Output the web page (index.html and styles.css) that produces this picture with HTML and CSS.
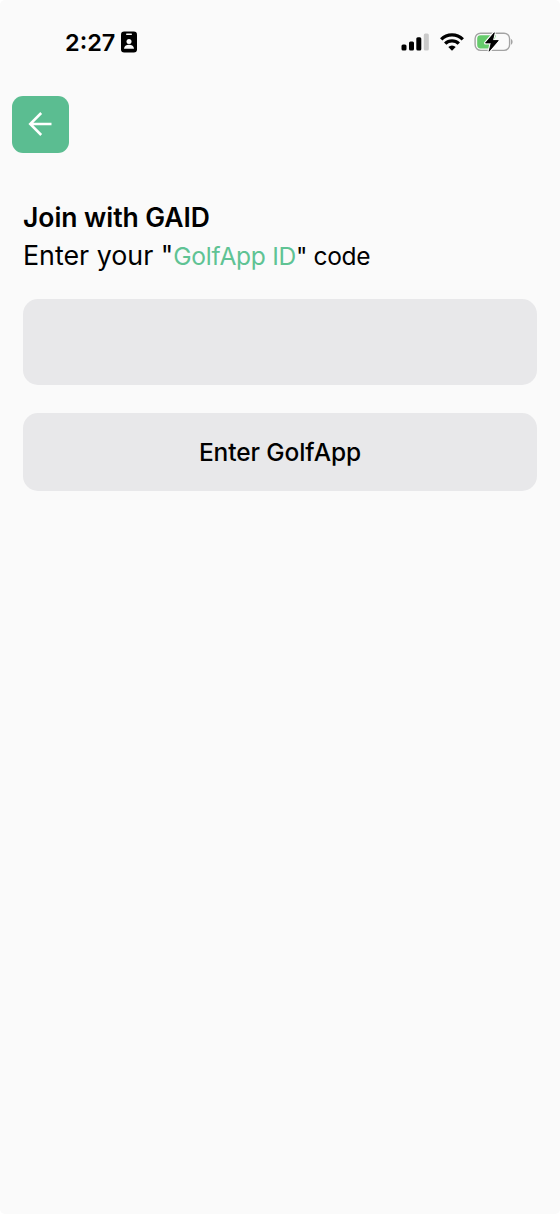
FILE: index.html
```html
<!DOCTYPE html>
<html lang="en">
<head>
<meta charset="utf-8">
<title>Join with GAID</title>
<link rel="stylesheet" href="styles.css">
</head>
<body>
<main class="screen">
  <header class="status">
    <div class="clock">
      <span class="time">2:27</span>
      <svg class="badge" width="16" height="22" viewBox="0 0 16 22">
        <rect width="16" height="21" y=".5" rx="3.2"/>
        <rect x="5" y="2.5" width="6" height="1.5" rx=".7" fill="#fafafa"/>
        <circle cx="8" cy="10.4" r="2.5" fill="#fafafa"/>
        <path d="M3 17.8c.2-2.4 2-4 5-4s4.800 1.600 5 4z" fill="#fafafa"/>
      </svg>
    </div>
    <div class="indicators">
      <svg width="28" height="20" viewBox="0 0 28 20">
        <rect x=".5" y="12.500" width="5" height="6" rx="1.500"/>
        <rect x="8" y="9.500" width="5" height="9" rx="1.500"/>
        <rect x="15.300" y="5.300" width="5" height="13.200" rx="1.500"/>
        <rect x="22.800" y="1.500" width="5" height="17" rx="1.500" fill="#cacaca"/>
      </svg>
      <svg width="24" height="20" viewBox="0 0 24 20">
        <g fill="none" stroke="#000" stroke-width="3.300">
          <path d="M1.200 7.300a15.300 15.300 0 0 1 21.600 0"/>
          <path d="M5.200 11.700a9.600 9.600 0 0 1 13.600 0"/>
        </g>
        <path d="M12 18.700l-3.700-3.800a5.300 5.300 0 0 1 7.400 0z"/>
      </svg>
      <svg width="39" height="20" viewBox="0.6 0 39 20">
        <rect x=".7" y="1.200" width="34.500" height="17.200" rx="5.600" fill="none" stroke="#a3a3a3" stroke-width="1.400"/>
        <path d="M36.600 7c2.100.8 2.100 4.900 0 5.700z" fill="#a3a3a3"/>
        <path d="M6.200 3.200H22v13.200H6.200a3.400 3.400 0 0 1-3.400-3.400V6.600a3.400 3.400 0 0 1 3.400-3.400z" fill="#66cb6c"/>
        <path d="M21.500 3h5.500v14h-9z" fill="#fafafa"/>
        <path d="M19.900.7 11.100 11h5.700L14.700 19.200 23.900 8.500h-5.700z" stroke="#fafafa" stroke-width="3" paint-order="stroke" stroke-linejoin="round"/>
        <path d="M19.900.7 11.100 11h5.700L14.700 19.200 23.900 8.500h-5.700z" stroke="#000" stroke-width=".7" stroke-linejoin="round"/>
      </svg>
    </div>
  </header>
  <button class="back" aria-label="Back">
    <svg width="24" height="24" viewBox="0 0 24 24" fill="none" stroke="#fff" stroke-width="2.500">
      <path d="M23.500 12H2.500M13.200 1 2.200 12l11 11"/>
    </svg>
  </button>
  <section class="form">
    <h1 class="title">Join with GAID</h1>
    <p class="prompt"><span class="lead">Enter your "</span><span class="brand">GolfApp ID</span><span class="tail">" code</span></p>
    <input class="code" type="text" aria-label="GolfApp ID">
    <button class="submit"><span>Enter GolfApp</span></button>
  </section>
</main>
</body>
</html>
```

FILE: styles.css
```css
* { box-sizing: border-box; }
body { margin: 0; background: #fff; font-family: Inter, sans-serif; color: #000; }
.screen { height: 1214px; background: #fafafa; border-radius: 5px; overflow: hidden; }
.status { display: flex; justify-content: space-between; align-items: center; height: 84px; padding: 0 46px 0 65px; }
.clock { display: flex; align-items: center; gap: 6px; }
.time { font-size: 23.5px; font-weight: 600; line-height: 28px; padding-top: 2px; width: 50px; white-space: nowrap; }
.indicators { display: flex; align-items: center; gap: 11px; }
svg { display: block; flex: none; overflow: visible; }
button { border: 0; padding: 0; font-family: inherit; color: inherit; }
.back { display: flex; align-items: center; justify-content: center; width: 57px; height: 57px; margin: 11.600px 0 0 11.600px; border-radius: 11px; background: #5bbd91; }
.form { display: flex; flex-direction: column; padding: 46px 23px 0; }
.title { margin: 0; font-size: 26.500px; font-weight: 600; letter-spacing: -0.050px; line-height: 36px; white-space: nowrap; }
.prompt { margin: 0; height: 64px; line-height: 40px; white-space: pre; }
.lead { font-size: 26.800px; }
.brand { font-size: 24.600px; letter-spacing: -0.300px; color: #5fc394; }
.tail { font-size: 24.500px; letter-spacing: -0.350px; }
.code { width: 100%; height: 86px; border: 0; border-radius: 15px; background: #e8e8ea; padding: 0 20px; font: 25px Inter, sans-serif; outline: 0; }
.submit { height: 78px; margin-top: 28px; border-radius: 15px; background: #e8e8ea; font-size: 24.500px; font-weight: 500; letter-spacing: -0.100px; }
.submit span { display: block; padding-top: 1px; }
```
